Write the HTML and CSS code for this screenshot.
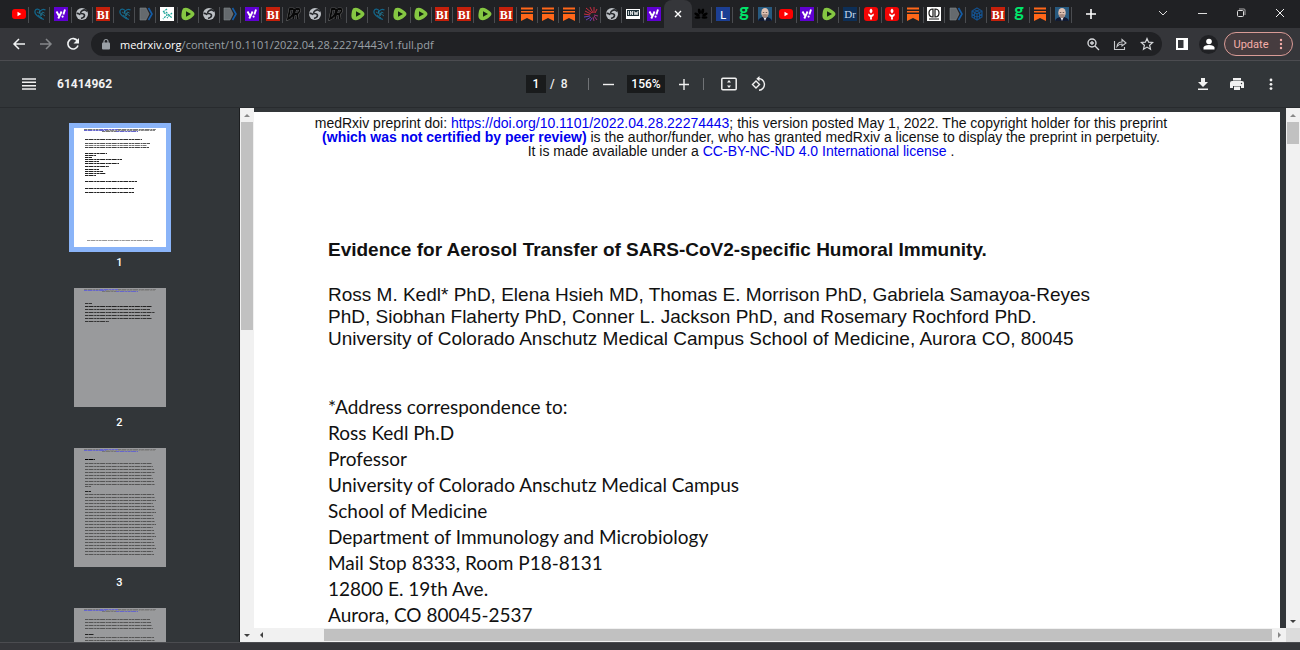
FILE: index.html
```html
<!DOCTYPE html>
<html lang="en">
<head>
  <meta charset="UTF-8">
  <meta name="viewport" content="width=device-width, initial-scale=1.0">
  <title>61414962</title>
  <link rel="stylesheet" href="styles.css">
</head>
<body>
  <header class="browser">
    <div class="tabstrip">
      <div class="tabs" id="tabs"></div>
      <button class="new-tab" aria-label="New tab"><svg width="12" height="12" viewBox="0 0 12 12"><path d="M6 1v10M1 6h10" stroke="#fff" stroke-width="1.6"/></svg></button>
      <div class="window-buttons">
        <button aria-label="Search tabs"><svg width="12" height="12" viewBox="0 0 12 12"><path d="M2 4l4 4 4-4" fill="none" stroke="#ddd"/></svg></button>
        <button aria-label="Minimize"><svg width="12" height="12" viewBox="0 0 12 12"><path d="M2 6.500h9" stroke="#ddd"/></svg></button>
        <button aria-label="Restore"><svg width="12" height="12" viewBox="0 0 12 12"><path d="M4 2h5q1 0 1 1v5" fill="none" stroke="#aaa"/><rect x="2.500" y="3.500" width="6" height="6" rx="1" fill="none" stroke="#ddd"/></svg></button>
        <button aria-label="Close window"><svg width="12" height="12" viewBox="0 0 12 12"><path d="M2 2l8 8M10 2l-8 8" stroke="#eee"/></svg></button>
      </div>
    </div>

    <div class="navbar">
      <button aria-label="Back"><svg width="14" height="14" viewBox="0 0 14 14"><path d="M13 7H2M7 2L2 7l5 5" fill="none" stroke="#f1f3f4" stroke-width="1.500"/></svg></button>
      <button aria-label="Forward"><svg width="14" height="14" viewBox="0 0 14 14"><path d="M1 7h11M7 2l5 5-5 5" fill="none" stroke="#85878a" stroke-width="1.500"/></svg></button>
      <button aria-label="Reload"><svg width="14" height="14" viewBox="0 0 14 14"><path d="M11.500 4A5.200 5.200 0 1 0 12 8.500" fill="none" stroke="#f1f3f4" stroke-width="1.600"/><path d="M13 1v5.500H7.500z" fill="#f1f3f4"/></svg></button>
      <div class="address">
        <svg width="12" height="12" viewBox="0 0 12 12"><rect x="2" y="4.500" width="8" height="7" rx="1" fill="#9aa0a6"/><path d="M4 5V3.500a2 2 0 0 1 4 0V5" fill="none" stroke="#9aa0a6" stroke-width="1.200"/></svg>
        <a href="#" class="url"><b>medrxiv.org</b>/content/10.1101/2022.04.28.22274443v1.full.pdf</a>
        <button aria-label="Zoom"><svg width="14" height="14" viewBox="0 0 14 14"><circle cx="6" cy="6" r="4" fill="none" stroke="#d5d7da" stroke-width="1.400"/><path d="M9 9l4 4M6 4v4M4 6h4" stroke="#d5d7da" stroke-width="1.300"/></svg></button>
        <button aria-label="Share"><svg width="14" height="14" viewBox="0 0 14 14"><path d="M1.500 4v8.500h10V10M4 9.500Q4.500 5 9 5V2.500L13 6 9 9V7Q6 7 4 9.500z" fill="none" stroke="#c8cacd" stroke-width="1.100"/></svg></button>
        <button aria-label="Bookmark"><svg width="14" height="14" viewBox="0 0 14 14"><path d="M7 1.500l1.600 3.700 4 .3-3 2.700.9 4L7 10.100l-3.500 2.100.9-4-3-2.700 4-.3z" fill="none" stroke="#d5d7da" stroke-width="1.200"/></svg></button>
      </div>
      <button aria-label="Side panel"><svg width="14" height="14" viewBox="0 0 14 14"><path fill="#fff" d="M1 1h12v12H1z"/><path fill="#35363a" d="M3 3h5.500v8H3z"/></svg></button>
      <button class="profile" aria-label="Profile"><svg width="14" height="14" viewBox="0 0 14 14"><circle cx="7" cy="4.500" r="2.800" fill="#fff"/><path d="M1.500 12.500v-2Q2 8 7 8t5.500 2.500v2z" fill="#fff"/></svg></button>
      <button class="update">Update <svg width="4" height="12" viewBox="0 0 4 12"><g fill="#f6aea9"><circle cx="2" cy="2" r="1.200"/><circle cx="2" cy="6" r="1.200"/><circle cx="2" cy="10" r="1.200"/></g></svg></button>
    </div>
  </header>

  <div class="pdfbar">
    <div class="pdfbar-start">
      <button aria-label="Menu"><svg width="14" height="14" viewBox="0 0 14 14"><path d="M0 2h14M0 5.300h14M0 8.700h14M0 12h14" stroke="#f1f1f1" stroke-width="1.500"/></svg></button>
      <span class="doc-title">61414962</span>
    </div>
    <div class="pdfbar-center">
      <input class="page-input" type="text" value="1" aria-label="Page number">
      <span class="page-total">/&nbsp; 8</span>
      <span class="divider"></span>
      <button aria-label="Zoom out"><svg width="12" height="12" viewBox="0 0 12 12"><path d="M1 6.500h11" stroke="#f1f1f1" stroke-width="1.400"/></svg></button>
      <input class="zoom-input" type="text" value="156%" aria-label="Zoom level">
      <button aria-label="Zoom in"><svg width="12" height="12" viewBox="0 0 12 12"><path d="M6 1v11M1 6.500h10" stroke="#f1f1f1" stroke-width="1.400"/></svg></button>
      <span class="divider"></span>
      <div class="view-buttons">
        <button aria-label="Fit to page"><svg width="16" height="14" viewBox="0 0 16 14"><rect x=".8" y="1.300" width="14.400" height="11.400" rx="1" fill="none" stroke="#f1f1f1" stroke-width="1.500"/><path d="M8 3l2 2.500H6zM8 11l2-2.500H6z" fill="#f1f1f1"/></svg></button>
        <button aria-label="Rotate"><svg width="16" height="16" viewBox="0 0 16 16"><path d="M5 5l3.500 3.500L5 12 1.500 8.500zM7 2.500A5.800 5.800 0 1 1 8 14.300" fill="none" stroke="#f1f1f1" stroke-width="1.400"/><path d="M8.500 0v5.500L5.300 2.700z" fill="#f1f1f1"/></svg></button>
      </div>
    </div>
    <div class="pdfbar-end">
      <button aria-label="Download"><svg width="12" height="14" viewBox="0 0 12 14"><path d="M4 1h4v4h3L6 10 1 5h3zM1 11.500h10V13H1z" fill="#f1f1f1"/></svg></button>
      <button aria-label="Print"><svg width="16" height="14" viewBox="0 0 16 14"><path d="M4 1h8v2.500H4zM3 4h10q2 0 2 2v5h-3V9H4v2H1V6q0-2 2-2zM5 9.500h6V13H5z" fill="#f1f1f1"/><circle cx="12.500" cy="6.500" r=".7" fill="#323639"/></svg></button>
      <button aria-label="More"><svg width="4" height="14" viewBox="0 0 4 14"><g fill="#f1f1f1"><circle cx="2" cy="3" r="1.400"/><circle cx="2" cy="7.300" r="1.400"/><circle cx="2" cy="11.600" r="1.400"/></g></svg></button>
    </div>
  </div>

  <main class="viewer">
    <nav class="thumbs" id="thumbs" aria-label="Pages"></nav>
    <div class="scroll-y scroll-side">
      <i class="arrow up"></i>
      <i class="handle"></i>
      <i class="arrow down"></i>
    </div>

    <div class="reader">
      <div class="stage">
        <article class="page">
          <div class="notice">
            medRxiv preprint doi: <a href="#">https://doi.org/10.1101/2022.04.28.22274443</a>; this version posted May 1, 2022. The copyright holder for this preprint<br>
            <a href="#"><b>(which was not certified by peer review)</b></a> is the author/funder, who has granted medRxiv a license to display the preprint in perpetuity.<br>
            It is made available under a <a href="#">CC-BY-NC-ND 4.0 International license</a> .
          </div>
          <div class="content">
            <h1>Evidence for Aerosol Transfer of SARS-CoV2-specific Humoral Immunity.</h1>
            <p class="authors">
              Ross M. Kedl* PhD, Elena Hsieh MD, Thomas E. Morrison PhD, Gabriela Samayoa-Reyes<br>
              PhD, Siobhan Flaherty PhD, Conner L. Jackson PhD, and Rosemary Rochford PhD.<br>
              University of Colorado Anschutz Medical Campus School of Medicine, Aurora CO, 80045
            </p>
            <address>
              *Address correspondence to:<br>
              Ross Kedl Ph.D<br>
              Professor<br>
              University of Colorado Anschutz Medical Campus<br>
              School of Medicine<br>
              Department of Immunology and Microbiology<br>
              Mail Stop 8333, Room P18-8131<br>
              12800 E. 19th Ave.<br>
              Aurora, CO 80045-2537
            </address>
          </div>
        </article>
        <div class="scroll-y scroll-main">
          <i class="arrow up"></i>
          <i class="handle"></i>
          <i class="arrow down"></i>
        </div>
      </div>
      <div class="scroll-x">
        <i class="arrow left"></i>
        <i class="handle"></i>
        <i class="arrow right"></i>
        <i class="corner"></i>
      </div>
    </div>
  </main>
  <footer class="bottom-edge"></footer>

  <script>
    // favicons, drawn on a 14x14 grid
    const icons = {
      yt: '<rect y="2" width="14" height="10" rx="3" fill="#f00"/><path d="M5.5 4.8v4.4L9.3 7z" fill="#fff"/>',
      heart: '<path d="M11 12.500C6 11 1 7 2 4c1-3 4-2 5.500 0C9 2 11 2 12.500 3" fill="none" stroke="#12658a" stroke-width="1.200"/><path d="M4 5l2.500 1.500V4L8 9l1.500-4 2 1M5 8l4 3M8 6l4 3" fill="none" stroke="#1c82a5" stroke-width=".7"/>',
      yahoo: '<path fill="#6001d2" d="M0 0h14v14H0z"/><path d="M2.500 4.500l2.300 4M7.600 4.500L4.300 11.500M11 2.500L9.400 7.500" stroke="#fff" stroke-width="1.900" fill="none"/><circle cx="8.600" cy="9.600" r="1.100" fill="#fff"/>',
      globe: '<circle cx="7" cy="7" r="6" fill="#bdc1c6"/><path d="M12 4.500Q10 2 7.500 3.500T6 6.500q3.500 0 3.500 2T6 11.500M1.500 6.500q2.500-.5 3.500 1.500" fill="none" stroke="#26282c" stroke-width="1.600"/>',
      bi: '<path fill="#c5200b" d="M0 0h14v14H0z"/><text x="7" y="11.500" text-anchor="middle" class="serif" font-size="12" fill="#fff">BI</text>',
      tag: '<path d="M1 1h6l3 6-3 6H1z" fill="#656a6e" stroke="#81868a" stroke-width=".6"/><path d="M9.500 1l3.500 6-3.500 6" fill="none" stroke="#145da9" stroke-width="1.600"/>',
      nodes: '<path fill="#fff" d="M0 0h14v14H0z"/><g stroke="#1fa69a" fill="none" stroke-dasharray="2 1" stroke-width="1.300"><path d="M7 2L3 5l4 3-4 4M6 5l6 6M12 6l-5 5"/></g>',
      rumble: '<path d="M2 1.500Q6-1 12 4.500q3 2.500 0 5Q6 15 2 12.500Q0 11 .5 7T2 1.500z" fill="#85c742"/><path d="M5 4.200v5.600L10 7z" fill="#142213"/>',
      dr: '<path d="M3 2h3q2 1 0 5T1 12zM9 2h3q2 2-2 5H8M10 7l1 5M8.500 2L6 12" fill="none" stroke="#777" stroke-width="2.600"/><path d="M3 2h3q2 1 0 5T1 12zM9 2h3q2 2-2 5H8M10 7l1 5M8.500 2L6 12" fill="none" stroke="#080808" stroke-width="1.800"/>',
      substack: '<path d="M1 .500h12v2H1zM1 4h12v1.500H1zM1 7h12v7L7 11l-6 3z" fill="#ff6719"/>',
      burst: '<g fill="none" stroke-width="1"><path d="M8 6L2 1M9 6L6 0M10 6V0M7 7L1 4M11 6l2-4M6 8L0 7" stroke="#c92d40"/><path d="M6 9L0 10M7 10l-5 3M8 11l-2 3" stroke="#6541b8"/><path d="M9 10l1 4M10 9l3 4M10 8l4 1" stroke="#a02f78"/></g>',
      inw: '<path fill="#fff" d="M0 2h14v10H0z"/><path fill="#1d3038" d="M1 3h12v6H1z"/><path d="M2.500 4v4M4.500 8V4l2 4V4M8 4l1 4 1-3 1 3 1-4" fill="none" stroke="#fff" stroke-width=".8"/>',
      peacock: '<g fill="#000"><ellipse cx="5.300" cy="4.500" rx="1.500" ry="3" transform="rotate(-12 5 4)"/><ellipse cx="8.700" cy="4.500" rx="1.500" ry="3" transform="rotate(12 9 4)"/><ellipse cx="3" cy="7.500" rx="3" ry="1.500" transform="rotate(30 3 7.500)"/><ellipse cx="11" cy="7.500" rx="3" ry="1.500" transform="rotate(-30 11 7.500)"/><ellipse cx="3.500" cy="10.500" rx="3" ry="1.300"/><ellipse cx="10.500" cy="10.500" rx="3" ry="1.300"/></g>',
      ell: '<path fill="#1c3f94" d="M0 0h14v14H0z"/><text x="7" y="11.500" text-anchor="middle" class="plain" font-size="12" fill="#fff">L</text>',
      gee: '<text x="7" y="10" text-anchor="middle" class="round" font-size="18" fill="#00e56b">g</text>',
      face: '<path fill="#275a80" d="M0 0h14v14H0z"/><path d="M0 14q1-4 7-4t7 4z" fill="#111a32"/><path d="M5.500 10.500h3L7 14z" fill="#e8edf5"/><ellipse cx="7" cy="5.800" rx="3.700" ry="4.900" fill="#dfc1b2"/><path d="M4 7.500q3-1 6 0-.5 3.500-3 3.500T4 7.500z" fill="#a58a80"/><path d="M4.800 5.500h1.500M7.700 5.500h1.500" stroke="#54443f" stroke-width=".8"/>',
      doctor: '<path fill="#0d2f57" d="M0 0h14v14H0z"/><text x="7" y="11" text-anchor="middle" class="serif-plain" font-size="11" fill="#c5d9ed">Dr</text>',
      torch: '<rect width="14" height="14" rx="3" fill="#f20505"/><path d="M7 1.500q3 2.500 0 5-3-2.500 0-5zM4 6.500l3 1.500 3-1.500q0 3-2.200 3.500l.2 2.500H6l.2-2.500Q4 9.500 4 6.500z" fill="#fff"/>',
      cd: '<path fill="#fff" d="M0 0h14v14H0z"/><path d="M6 2Q2 2 2 6t4 4zM8 2q4 0 4 4t-4 4zM2 12h10" fill="none" stroke="#161616" stroke-width="1.200"/>',
      cube: '<path d="M7 1l5 3v6l-5 3-5-3V4zM2 4l5 3 5-3M7 7v6M4.500 2.500l5 3v6M9.500 2.500l-5 3v6M2 7l5 3 5-3" fill="none" stroke="#14508c" stroke-width="1.200"/>'
    };

    const before = 'yt heart yahoo globe bi heart tag nodes rumble globe tag yahoo bi dr globe dr rumble heart rumble rumble bi bi rumble bi substack substack substack burst globe inw yahoo'.split(' ');
    const after = 'peacock ell gee face yt yahoo rumble doctor torch torch substack cd tag cube bi gee substack face'.split(' ');

    const tab = name => `<button class="tab" aria-label="${name}"><svg width="14" height="14" viewBox="0 0 14 14">${icons[name]}</svg></button>`;

    document.getElementById('tabs').innerHTML =
      before.map(tab).join('') +
      '<button class="tab active" aria-label="Close tab"><svg width="10" height="10" viewBox="0 0 10 10"><path d="M2 2l6 6M8 2L2 8" stroke="#fff" stroke-width="1.4"/></svg></button>' +
      after.map(tab).join('');

    // each row: [y, x, width, ink]
    const head = [[1, 10, 16, '#777'], [1, 26, 18, '#66c'], [1, 44, 38, '#777'], [2, 10, 22, '#66c'], [2, 32, 49, '#888'], [3, 28, 14, '#777'], [3, 42, 22, '#66c']];
    const rows = (from, to, width) => {
      const out = [];
      for (let y = from; y < to; y += 3) out.push([y, 11, width - (y % 4), '#555']);
      return out;
    };
    const pages = [
      [[11, 11, 57, '#333'], [15, 11, 65, '#555'], [17, 11, 62, '#777'], [19, 11, 64, '#444'],
        [25, 11, 22, '#222'], [27, 11, 11, '#222'], [29, 11, 7, '#222'], [31, 11, 37, '#222'], [33, 11, 14, '#222'], [35, 11, 34, '#222'], [38, 11, 24, '#222'],
        [41, 11, 14, '#222'], [43, 11, 18, '#222'], [45, 11, 21, '#222'], [47, 11, 11, '#222'],
        [53, 11, 52, '#222'], [60, 11, 49, '#222'], [64, 11, 49, '#222'], [112, 13, 66, '#999']],
      [[15, 11, 7, '#333'], [18, 11, 67, '#222'], [21, 11, 65, '#333'], [24, 11, 70, '#333'], [27, 11, 65, '#333'], [30, 11, 67, '#333'], [33, 11, 24, '#333']],
      [[11, 11, 10, '#000'], ...rows(15, 37, 70), [38, 11, 6, '#555'], [43, 11, 6, '#222'], ...rows(46, 108, 71)],
      [...rows(11, 21, 68), [26, 11, 9, '#222'], ...rows(29, 108, 70)]
    ];

    document.getElementById('thumbs').innerHTML = pages.map((lines, i) => `
      <a href="#" class="thumb${i === 0 ? ' current' : ''}">
        <svg width="92" height="119" viewBox="0 0 92 119">
          ${head.concat(lines).map(([y, x, w, ink]) => `<path d="M${x} ${y + .5}h${w}" stroke="${ink}" stroke-dasharray="3 .5 5 .7 2 .4"/>`).join('')}
        </svg>
        <span>${i + 1}</span>
      </a>`).join('');
  </script>
</body>
</html>
```

FILE: styles.css
```css
:root {
  --frame: #202124;
  --bar: #35363a;
  --pdf: #323639;
  --track: #f1f1f1;
  --handle: #c1c1c1;
}

* {
  box-sizing: border-box;
  margin: 0;
  padding: 0;
}

body {
  display: flex;
  flex-direction: column;
  height: 100vh;
  overflow: hidden;
  background-color: var(--bar);
  font-family: Roboto, sans-serif;
}

button {
  display: flex;
  align-items: center;
  justify-content: center;
  border: none;
  background: none;
  color: inherit;
  font: inherit;
  cursor: pointer;
}

svg {
  display: block;
  flex: none;
}

.serif {
  font-family: "Liberation Serif", serif;
  font-weight: bold;
}

.serif-plain {
  font-family: "Liberation Serif", serif;
}

.plain {
  font-family: Lato, sans-serif;
}

.round {
  font-family: Lato, sans-serif;
  font-weight: bold;
}

/* tab strip */
.tabstrip {
  display: flex;
  height: 28px;
  padding-left: 8px;
  background-color: var(--frame);
}

.tabs {
  display: flex;
  flex: 1;
}

.tab {
  position: relative;
  flex: 1;
  min-width: 0;
}

.tab svg {
  overflow: visible;
}

.tab::after {
  content: "";
  position: absolute;
  right: 0;
  top: 7px;
  width: 1px;
  height: 16px;
  background-color: #4a4c50;
}

.tab.active {
  flex: 0 0 28px;
  margin: 0 -1px;
  border-radius: 8px 8px 0 0;
  background-color: var(--bar);
}

.tab.active::after,
.tab:has(+ .active)::after {
  display: none;
}

.new-tab {
  width: 38px;
}

.window-buttons {
  display: flex;
  width: 190px;
  padding: 0 1px 2px 34px;
}

.window-buttons button {
  flex: 1;
}

/* navigation bar */
.navbar {
  display: flex;
  align-items: center;
  height: 32px;
  padding: 0 7px 0 5px;
  background-color: var(--bar);
}

.navbar > button {
  width: 27px;
  height: 24px;
}

.address {
  display: flex;
  flex: 1;
  align-items: center;
  height: 24px;
  margin: 0 6px 0 5px;
  padding: 0 2px 0 9px;
  border-radius: 12px;
  background-color: var(--frame);
}

.address button {
  width: 27px;
  height: 24px;
}

.url {
  flex: 1;
  padding-left: 8px;
  color: #9aa0a6;
  font: 11px "Open Sans", sans-serif;
  text-decoration: none;
  white-space: nowrap;
}

.url b {
  color: #fff;
  font-weight: normal;
}

.navbar > .profile {
  width: 19px;
  height: 19px;
  margin: 0 6px 0 4px;
  border-radius: 50%;
  background-color: var(--frame);
}

.navbar > .update {
  gap: 11px;
  width: 69px;
  border: 1px solid #d99b96;
  border-radius: 12px;
  background-color: #463c3f;
  color: #f6aea9;
  font-size: 11px;
}

/* pdf toolbar */
.pdfbar {
  display: grid;
  grid-template-columns: 1fr auto 1fr;
  align-items: center;
  height: 48px;
  border-top: 1px solid #4b4c50;
  border-bottom: 1px solid #282b2e;
  background-color: var(--pdf);
  color: #f1f1f1;
  font-size: 12px;
  font-weight: 500;
}

.pdfbar-start,
.pdfbar-center,
.pdfbar-end {
  display: flex;
  align-items: center;
}

.pdfbar-start {
  gap: 21px;
  padding-left: 22px;
}

.doc-title {
  font-weight: bold;
}

.pdfbar-end {
  justify-content: flex-end;
  padding-right: 12px;
}

.pdfbar-end button {
  width: 34px;
}

.pdfbar input {
  height: 18px;
  border: none;
  background-color: #191b1c;
  color: #fff;
  font: inherit;
  text-align: center;
}

.page-input {
  width: 20px;
}

.page-total {
  width: 42px;
  padding-left: 4px;
}

.divider {
  width: 1px;
  height: 12px;
  background-color: #707376;
}

.pdfbar-center button,
.zoom-input {
  width: 38px;
}

.view-buttons {
  display: flex;
  padding-left: 10px;
}

.view-buttons button {
  width: 30px;
}

/* viewer */
.viewer {
  display: flex;
  flex: 1;
  min-height: 0;
  background-color: var(--pdf);
}

.thumbs {
  width: 240px;
  padding-top: 20px;
  overflow: hidden;
  border-right: 1px solid #1c1e20;
}

.thumb {
  display: flex;
  flex-direction: column;
  align-items: center;
  gap: 9px;
  height: 160px;
  color: #fff;
  font-size: 11px;
  font-weight: 500;
  line-height: 14px;
  text-decoration: none;
}

.thumb svg {
  background-color: #999a9c;
}

.thumb.current svg {
  background-color: #fff;
  box-shadow: 0 0 0 5px #8ab4f8;
}

.scroll-y {
  display: flex;
  flex-direction: column;
  width: 14px;
  background-color: var(--track);
}

.scroll-y .handle {
  margin: 0 1px;
  background-color: var(--handle);
}

.scroll-side .handle {
  height: 208px;
}

.scroll-main .handle {
  height: 22px;
}

.scroll-y .down {
  margin-top: auto;
}

.arrow {
  display: flex;
  flex: none;
  align-items: center;
  justify-content: center;
  width: 14px;
  height: 14px;
}

.arrow::before {
  content: "";
  border: 3px solid transparent;
}

.up::before {
  border-top: none;
  border-bottom-color: #888;
}

.down::before {
  border-bottom: none;
  border-top-color: #404040;
}

.left::before {
  border-left: none;
  border-right-color: #404040;
}

.right::before {
  border-right: none;
  border-left-color: #888;
}

.reader {
  display: flex;
  flex: 1;
  flex-direction: column;
  min-width: 0;
}

.stage {
  display: flex;
  flex: 1;
  min-height: 0;
}

.page {
  flex: 1;
  min-width: 0;
  margin: 4px 6px 0 0;
  padding: 4px 0 0 57px;
  overflow: hidden;
  background-color: #fff;
  color: #111;
  font-family: "Liberation Sans", Arial, sans-serif;
  white-space: nowrap;
}

.notice {
  width: 860px;
  font-size: 14px;
  line-height: 14px;
  text-align: center;
}

.notice a {
  color: #00e;
  text-decoration: none;
}

.content {
  padding: 81px 0 0 17px;
}

.content h1 {
  font-size: 19px;
  line-height: 22px;
}

.authors {
  margin-top: 23px;
  font-size: 19px;
  line-height: 22px;
}

.content address {
  margin-top: 44px;
  font: 19px/26px Lato, Carlito, sans-serif;
}

.scroll-x {
  display: flex;
  height: 14px;
  background-color: var(--track);
}

.scroll-x .handle {
  flex: 1;
  margin: 1px 0 1px 56px;
  background-color: var(--handle);
}

.corner {
  width: 14px;
  background-color: #dcdcdc;
}

.bottom-edge {
  height: 8px;
  background-color: var(--bar);
  border-top: 1px solid #4b4c50;
}
```
